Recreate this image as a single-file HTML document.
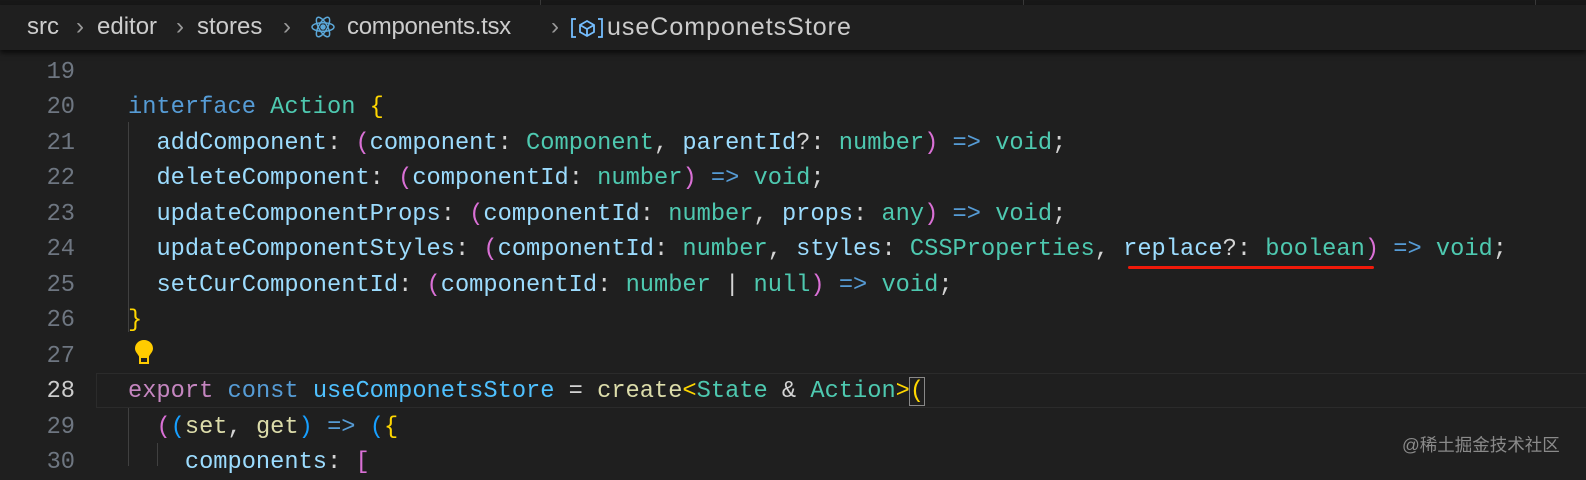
<!DOCTYPE html>
<html><head><meta charset="utf-8"><style>
body{margin:0;width:1586px;height:466px;background:#1f1f1f;overflow:hidden;position:relative;font-family:"Liberation Mono",monospace}
.top{position:absolute;left:0;top:0;width:1586px;height:5px;background:#181818}
.top i{position:absolute;top:0;width:1px;height:5px;background:#3a3a3a}
.bc{position:absolute;left:0;top:5px;width:1586px;height:45px;background:#1f1f1f;box-shadow:0 3px 5px #000a;font-family:"Liberation Sans",sans-serif;font-size:24px;color:#cccccc;line-height:44px;white-space:nowrap;z-index:2}
.bc span{position:absolute;top:0}
.ln{position:absolute;left:0;width:75px;text-align:right;color:#6e7681;font-size:23.7px}
.cd{position:absolute;left:128px;font-size:23.7px;white-space:pre;color:#d4d4d4}
.k{color:#569cd6}.t{color:#4ec9b0}.p{color:#9cdcfe}.f{color:#dcdcaa}.g{color:#ffd700}.m{color:#da70d6}.b{color:#179fff}.e{color:#c586c0}.v{color:#4fc1ff}
.guide{position:absolute;width:1px;background:#404040}
</style></head><body>
<div class="top"><i style="left:540px"></i><i style="left:1023px"></i><i style="left:1535px"></i></div>
<div class="bc">
<span style="left:27px">src</span><span style="left:76px;color:#999">›</span>
<span style="left:97px">editor</span><span style="left:176px;color:#999">›</span>
<span style="left:197px">stores</span><span style="left:283px;color:#999">›</span>
<svg style="position:absolute;left:310px;top:9px" width="26" height="26" viewBox="0 0 26 26" fill="none" stroke="#5ba7d8" stroke-width="1.5"><ellipse cx="13" cy="13" rx="11" ry="4.3"/><ellipse cx="13" cy="13" rx="11" ry="4.3" transform="rotate(60 13 13)"/><ellipse cx="13" cy="13" rx="11" ry="4.3" transform="rotate(120 13 13)"/><circle cx="13" cy="13" r="2" fill="#5ba7d8"/></svg>
<span style="left:347px;letter-spacing:-0.3px">components.tsx</span><span style="left:551px;color:#999">›</span>
<svg style="position:absolute;left:570px;top:12px" width="34" height="22" viewBox="0 0 34 22" fill="none" stroke="#75beff" stroke-width="1.8"><path d="M6 2H2v18h4M28 2h4v18h-4"/><path d="M17 4l7 4v7l-7 4-7-4V8z M10 8l7 4 7-4 M17 12v7"/></svg>
<span style="left:607px;font-size:25px;letter-spacing:1px">useComponetsStore</span>
</div>
<div style="position:absolute;left:96px;top:373px;width:1490px;height:35px;border:1px solid #2b2b2b;box-sizing:border-box;border-right:none"></div>
<div class="guide" style="left:128px;top:122px;height:210px"></div>
<div class="guide" style="left:128px;top:408px;height:58px"></div>
<div class="guide" style="left:157px;top:443px;height:23px"></div>
<div style="position:absolute;top:55px;left:0;width:1586px;line-height:35.45px">
<div class="ln" style="top:0">19</div>
<div class="ln" style="top:35.45px">20</div><div class="cd" style="top:35.45px"><span class="k">interface</span> <span class="t">Action</span> <span class="g">{</span></div>
<div class="ln" style="top:70.9px">21</div><div class="cd" style="top:70.9px">  <span class="p">addComponent</span>: <span class="m">(</span><span class="p">component</span>: <span class="t">Component</span>, <span class="p">parentId</span>?: <span class="t">number</span><span class="m">)</span> <span class="k">=&gt;</span> <span class="t">void</span>;</div>
<div class="ln" style="top:106.35px">22</div><div class="cd" style="top:106.35px">  <span class="p">deleteComponent</span>: <span class="m">(</span><span class="p">componentId</span>: <span class="t">number</span><span class="m">)</span> <span class="k">=&gt;</span> <span class="t">void</span>;</div>
<div class="ln" style="top:141.8px">23</div><div class="cd" style="top:141.8px">  <span class="p">updateComponentProps</span>: <span class="m">(</span><span class="p">componentId</span>: <span class="t">number</span>, <span class="p">props</span>: <span class="t">any</span><span class="m">)</span> <span class="k">=&gt;</span> <span class="t">void</span>;</div>
<div class="ln" style="top:177.25px">24</div><div class="cd" style="top:177.25px">  <span class="p">updateComponentStyles</span>: <span class="m">(</span><span class="p">componentId</span>: <span class="t">number</span>, <span class="p">styles</span>: <span class="t">CSSProperties</span>, <span class="p">replace</span>?: <span class="t">boolean</span><span class="m">)</span> <span class="k">=&gt;</span> <span class="t">void</span>;</div>
<div class="ln" style="top:212.7px">25</div><div class="cd" style="top:212.7px">  <span class="p">setCurComponentId</span>: <span class="m">(</span><span class="p">componentId</span>: <span class="t">number</span> | <span class="t">null</span><span class="m">)</span> <span class="k">=&gt;</span> <span class="t">void</span>;</div>
<div class="ln" style="top:248.15px">26</div><div class="cd" style="top:248.15px"><span class="g">}</span></div>
<div class="ln" style="top:283.6px">27</div>
<div class="ln" style="top:319.05px;color:#cccccc">28</div><div class="cd" style="top:319.05px"><span class="e">export</span> <span class="k">const</span> <span class="v">useComponetsStore</span> = <span class="f">create</span><span class="g">&lt;</span><span class="t">State</span> &amp; <span class="t">Action</span><span class="g">&gt;</span><span class="g" style="outline:1px solid #888">(</span></div>
<div class="ln" style="top:354.5px">29</div><div class="cd" style="top:354.5px">  <span class="m">(</span><span class="b">(</span><span class="f">set</span>, <span class="f">get</span><span class="b">)</span> <span class="k">=&gt;</span> <span class="b">(</span><span class="g">{</span></div>
<div class="ln" style="top:389.95px">30</div><div class="cd" style="top:389.95px">    <span class="p">components</span>: <span class="m">[</span></div>
</div>
<svg style="position:absolute;left:133px;top:339px" width="22" height="26" viewBox="0 0 22 26"><path d="M11 1C5.5 1 2 5 2 9.5c0 3.5 3 5.5 4 8h10c1-2.5 4-4.5 4-8C20 5 16.5 1 11 1z" fill="#ffcc00"/><rect x="7" y="18" width="8" height="6" fill="none" stroke="#ffcc00" stroke-width="2"/></svg>
<div style="position:absolute;left:1128px;top:266px;width:246px;height:3px;background:#f01a0a;border-radius:2px"></div>
<div style="position:absolute;left:1402px;top:432px;font-family:'Liberation Sans','Noto Sans CJK SC',sans-serif;font-size:17.5px;color:#8a8a8a">@稀土掘金技术社区</div>
</body></html>
